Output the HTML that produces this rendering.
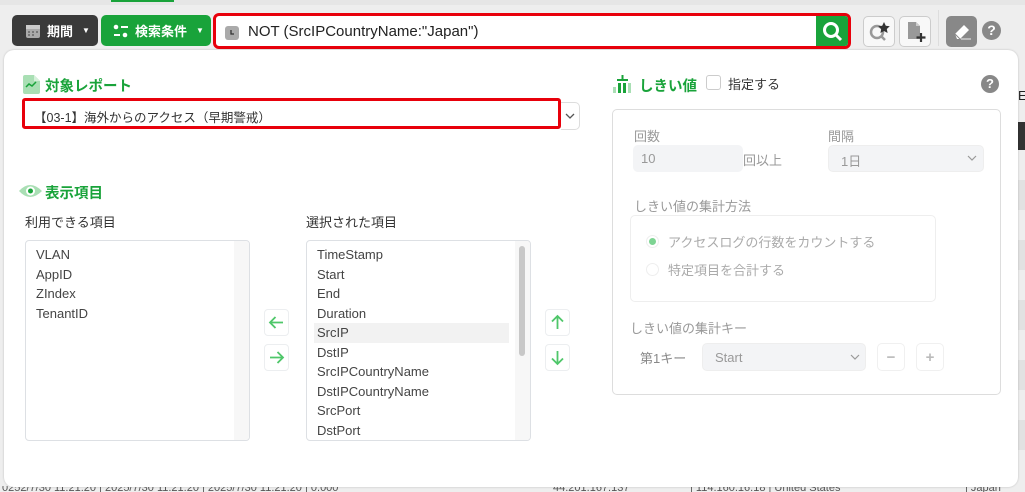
<!DOCTYPE html>
<html><head><meta charset="utf-8"><style>
*{box-sizing:border-box;margin:0;padding:0}
body{width:1025px;height:492px;overflow:hidden;background:#eeeeee;font-family:"Liberation Sans","Noto Sans CJK JP",sans-serif;position:relative;color:#333}
.abs{position:absolute}
.btn{position:absolute;border-radius:5px;color:#fff;font-size:13px;font-weight:bold;display:flex;align-items:center}
.lbl{font-size:13px;color:#333}
.list{position:absolute;border:1px solid #dde0e4;border-radius:4px;background:#fff;font-size:13px;color:#444}
.list div{height:19.5px;line-height:19.5px;padding-left:10px}
.sq{position:absolute;width:25px;height:27px;border:1px solid #eceef0;border-radius:4px;background:#fff}
.g{color:#999}
</style></head><body>
<div class="abs" style="left:0;top:0;width:1025px;height:5px;background:#e6e6e6"></div>
<div class="abs" style="left:111px;top:0;width:63px;height:2px;background:#19a33a"></div>
<div class="abs" style="left:1018px;top:88px;font-size:13px;color:#222">E</div>
<div class="abs" style="left:1018px;top:122px;width:7px;height:28px;background:#333"></div>
<div class="abs" style="left:1018px;top:180px;width:7px;height:30px;background:#e2e2e2"></div>
<div class="abs" style="left:1018px;top:240px;width:7px;height:30px;background:#e2e2e2"></div>
<div class="abs" style="left:1018px;top:300px;width:7px;height:30px;background:#e2e2e2"></div>
<div class="abs" style="left:1018px;top:360px;width:7px;height:30px;background:#e2e2e2"></div>
<div class="abs" style="left:1018px;top:420px;width:7px;height:30px;background:#e2e2e2"></div>
<div class="abs" style="left:0;top:486px;width:1025px;font-size:11px;color:#555;white-space:nowrap;line-height:8px;overflow:hidden;height:6px">
<span style="position:absolute;left:2px;top:-2px">0252/7/30 11:21:20 | 2025/7/30 11:21:20 | 2025/7/30 11:21:20 | 0.000</span>
<span style="position:absolute;left:553px;top:-2px">44.201.167.137</span><span style="position:absolute;left:690px;top:-2px">| 114.160.16.18 | United States</span><span style="position:absolute;left:965px;top:-2px">| Japan</span></div>

<div class="btn" style="left:12px;top:15px;width:86px;height:31px;background:#3a3a3a">
<svg style="margin-left:13px" width="16" height="16" viewBox="0 0 16 16"><rect x="1" y="2" width="14" height="13" rx="2" fill="#aaa"/><rect x="1" y="2" width="14" height="4" fill="#ccc"/><g fill="#777"><rect x="3" y="8" width="2" height="2"/><rect x="7" y="8" width="2" height="2"/><rect x="11" y="8" width="2" height="2"/><rect x="3" y="11" width="2" height="2"/><rect x="7" y="11" width="2" height="2"/></g></svg>
<span style="margin-left:6px">期間</span><span style="margin-left:9px;font-size:8px">▼</span></div>
<div class="btn" style="left:101px;top:15px;width:110px;height:31px;background:#19a33a">
<svg style="margin-left:12px" width="16" height="14" viewBox="0 0 16 14"><circle cx="3" cy="3" r="2.3" fill="#fff"/><rect x="8" y="2" width="7" height="2" fill="#fff"/><rect x="1" y="10" width="6" height="2" fill="#fff"/><circle cx="12" cy="11" r="2.3" fill="#fff"/></svg>
<span style="margin-left:6px">検索条件</span><span style="margin-left:9px;font-size:8px">▼</span></div>
<div class="abs" style="left:213px;top:13px;width:638px;height:36px;border:3px solid #e8000b;border-radius:6px;background:#fff;overflow:hidden">
<svg class="abs" style="left:9px;top:10px" width="14" height="14" viewBox="0 0 14 14"><rect width="14" height="14" rx="3" fill="#aaa"/><path d="M6 4v4h3" stroke="#333" stroke-width="1.3" fill="none"/></svg>
<div class="abs" style="left:32px;top:7px;font-size:15px;color:#222">NOT (SrcIPCountryName:"Japan")</div>
<div class="abs" style="right:0;top:0;width:32px;height:30px;background:#19a33a">
<svg style="margin:5px 0 0 6px" width="22" height="22" viewBox="0 0 22 22"><circle cx="9" cy="9" r="6.5" stroke="#fff" stroke-width="3" fill="none"/><path d="M14 14l5 5" stroke="#fff" stroke-width="3"/></svg></div></div>
<div class="abs" style="left:863px;top:16px;width:32px;height:31px;border:1px solid #ccc;border-radius:5px;background:#f8f8f8">
<svg style="margin:4px 0 0 4px" width="24" height="22" viewBox="0 0 24 22"><circle cx="9" cy="11" r="6" stroke="#999" stroke-width="2.5" fill="none"/><path d="M13 15l4 4" stroke="#999" stroke-width="2.5"/><path d="M16 1l1.8 3.7 4 .5-3 2.8.8 4-3.6-2-3.6 2 .8-4-3-2.8 4-.5z" fill="#333"/></svg></div>
<div class="abs" style="left:899px;top:16px;width:32px;height:31px;border:1px solid #ccc;border-radius:5px;background:#f8f8f8">
<svg style="margin:4px 0 0 7px" width="20" height="22" viewBox="0 0 20 22"><path d="M1 1h8l4 4v13H1z" fill="#999"/><path d="M9 1v4h4" fill="#ccc"/><path d="M14 12v9M9.5 16.5h9" stroke="#333" stroke-width="2.2"/></svg></div>
<div class="abs" style="left:938px;top:10px;width:1px;height:36px;background:#ddd"></div>
<div class="abs" style="left:946px;top:16px;width:31px;height:31px;border-radius:5px;background:#888">
<svg style="margin:6px 0 0 5px" width="22" height="18" viewBox="0 0 22 18"><path d="M4 12l9-9 5 5-9 9H6z" fill="#fff"/><path d="M4 12l5 5" stroke="#888" stroke-width="1"/><path d="M10 17h10" stroke="#ccc" stroke-width="1.5"/></svg></div>
<div class="abs" style="left:982px;top:21px;width:19px;height:19px;border-radius:50%;background:#888;color:#fff;font-weight:bold;font-size:14px;text-align:center;line-height:19px">?</div>

<div class="abs" style="left:4px;top:50px;width:1014px;height:437px;background:#fff;border-radius:10px;box-shadow:0 0 2px rgba(0,0,0,.2)"></div>

<svg class="abs" style="left:23px;top:75px" width="17" height="19" viewBox="0 0 17 19"><path d="M2 0h9l6 6v11a2 2 0 0 1-2 2H2a2 2 0 0 1-2-2V2a2 2 0 0 1 2-2z" fill="#a9dfb4"/><path d="M11 0v6h6" fill="#d5f0da"/><path d="M3 12l3-3 3 2 4-4" stroke="#19a33a" stroke-width="1.5" fill="none"/></svg>
<div class="abs" style="left:45px;top:75px;font-size:14.5px;font-weight:bold;color:#19a33a">対象レポート</div>
<div class="abs" style="left:22px;top:98px;width:539px;height:31px;border:3px solid #e8000b;border-radius:3px;background:#fff"></div>
<div class="abs" style="left:34px;top:107px;font-size:12.5px;color:#333">【03-1】海外からのアクセス（早期警戒）</div>
<div class="abs" style="left:561px;top:102px;width:19px;height:28px;border:1px solid #ddd;border-left:none;border-radius:0 5px 5px 0"></div>
<svg class="abs" style="left:565px;top:113px" width="10" height="7" viewBox="0 0 10 7"><path d="M1 1l4 4 4-4" stroke="#555" stroke-width="1.3" fill="none"/></svg>

<svg class="abs" style="left:19px;top:182px" width="23" height="18" viewBox="0 0 23 18"><path d="M0 9Q11-3 23 9Q11 21 0 9z" fill="#a9dfb4"/><circle cx="11.5" cy="9" r="4.5" fill="#fff"/><circle cx="11.5" cy="9" r="2.5" fill="#19a33a"/></svg>
<div class="abs" style="left:45px;top:182px;font-size:14.5px;font-weight:bold;color:#19a33a">表示項目</div>
<div class="abs lbl" style="left:25px;top:212px">利用できる項目</div>
<div class="abs lbl" style="left:306px;top:212px">選択された項目</div>
<div class="list" style="left:25px;top:240px;width:225px;height:201px;padding-top:4px">
<div>VLAN</div><div>AppID</div><div>ZIndex</div><div>TenantID</div>
<span class="abs" style="right:0;top:0;width:15px;height:199px;background:#f7f7f7;border-radius:0 4px 4px 0"></span></div>
<div class="list" style="left:306px;top:240px;width:225px;height:201px;padding-top:4px;overflow:hidden">
<div>TimeStamp</div><div>Start</div><div>End</div><div>Duration</div><div style="background:#f2f2f2;margin-left:7px;padding-left:3px;width:195px">SrcIP</div><div>DstIP</div><div>SrcIPCountryName</div><div>DstIPCountryName</div><div>SrcPort</div><div>DstPort</div>
<span class="abs" style="right:0;top:0;width:15px;height:199px;background:#f7f7f7"></span>
<span class="abs" style="right:5px;top:5px;width:6px;height:110px;background:#c8c8c8;border-radius:3px"></span></div>
<div class="sq" style="left:264px;top:309px"><svg width="23" height="25" viewBox="0 0 23 25"><path d="M18 12.5H5M10.5 7l-5.5 5.5 5.5 5.5" stroke="#4fc76a" stroke-width="1.8" fill="none"/></svg></div>
<div class="sq" style="left:264px;top:344px"><svg width="23" height="25" viewBox="0 0 23 25"><path d="M5 12.5h13M12.5 7l5.5 5.5-5.5 5.5" stroke="#4fc76a" stroke-width="1.8" fill="none"/></svg></div>
<div class="sq" style="left:545px;top:309px"><svg width="23" height="25" viewBox="0 0 23 25"><path d="M11.5 19V6M6 11.5l5.5-5.5 5.5 5.5" stroke="#4fc76a" stroke-width="1.8" fill="none"/></svg></div>
<div class="sq" style="left:545px;top:344px"><svg width="23" height="25" viewBox="0 0 23 25"><path d="M11.5 6v13M6 13.5l5.5 5.5 5.5-5.5" stroke="#4fc76a" stroke-width="1.8" fill="none"/></svg></div>

<svg class="abs" style="left:613px;top:74px" width="19" height="19" viewBox="0 0 19 19"><rect x="0" y="13" width="3" height="6" fill="#a9dfb4"/><rect x="5" y="9" width="3" height="10" fill="#19a33a"/><rect x="10" y="9" width="3" height="10" fill="#19a33a"/><rect x="15" y="9" width="3" height="10" fill="#a9dfb4"/><rect x="4" y="5" width="11" height="2" fill="#19a33a"/><rect x="8.5" y="1" width="2" height="5" fill="#19a33a"/></svg>
<div class="abs" style="left:639px;top:75px;font-size:14.5px;font-weight:bold;color:#19a33a">しきい値</div>
<div class="abs" style="left:706px;top:75px;width:15px;height:15px;border:1px solid #ccc;border-radius:3px"></div>
<div class="abs lbl" style="left:728px;top:74px">指定する</div>
<div class="abs" style="left:981px;top:75px;width:18px;height:18px;border-radius:50%;background:#888;color:#fff;font-weight:bold;font-size:13px;text-align:center;line-height:18px">?</div>
<div class="abs" style="left:612px;top:109px;width:389px;height:286px;border:1px solid #ddd;border-radius:5px"></div>
<div class="abs lbl g" style="left:634px;top:126px">回数</div>
<div class="abs lbl g" style="left:828px;top:126px">間隔</div>
<div class="abs" style="left:633px;top:145px;width:110px;height:27px;background:#f3f4f6;border-radius:5px;font-size:13px;color:#999;padding:6px 8px">10</div>
<div class="abs lbl g" style="left:743px;top:150px">回以上</div>
<div class="abs" style="left:828px;top:145px;width:156px;height:27px;background:#f3f4f6;border:1px solid #eee;border-radius:5px;font-size:13px;color:#999;padding:5px 12px">1日</div>
<svg class="abs" style="left:967px;top:155px" width="10" height="7" viewBox="0 0 10 7"><path d="M1 1l4 4 4-4" stroke="#999" stroke-width="1.2" fill="none"/></svg>
<div class="abs lbl g" style="left:634px;top:196px">しきい値の集計方法</div>
<div class="abs" style="left:630px;top:215px;width:306px;height:87px;border:1px solid #eee;border-radius:5px"></div>
<div class="abs" style="left:646px;top:235px;width:13px;height:13px;border-radius:50%;border:1px solid #eee;background:#fff"><span style="display:block;margin:2px;width:7px;height:7px;border-radius:50%;background:#7ed493"></span></div>
<div class="abs lbl" style="left:668px;top:232px;color:#aaa">アクセスログの行数をカウントする</div>
<div class="abs" style="left:646px;top:263px;width:13px;height:13px;border-radius:50%;border:1px solid #eee"></div>
<div class="abs lbl" style="left:668px;top:260px;color:#aaa">特定項目を合計する</div>
<div class="abs lbl g" style="left:630px;top:318px">しきい値の集計キー</div>
<div class="abs lbl" style="left:640px;top:348px;color:#888">第1キー</div>
<div class="abs" style="left:702px;top:343px;width:164px;height:28px;background:#f3f4f6;border:1px solid #eee;border-radius:5px;font-size:13px;color:#999;padding:6px 12px">Start</div>
<svg class="abs" style="left:850px;top:354px" width="10" height="7" viewBox="0 0 10 7"><path d="M1 1l4 4 4-4" stroke="#999" stroke-width="1.2" fill="none"/></svg>
<div class="abs" style="left:877px;top:343px;width:28px;height:28px;border:1px solid #f0f0f0;border-radius:5px;color:#bbb;font-weight:bold;text-align:center;line-height:27px;font-size:15px">−</div>
<div class="abs" style="left:916px;top:343px;width:28px;height:28px;border:1px solid #f0f0f0;border-radius:5px;color:#bbb;font-weight:bold;text-align:center;line-height:27px;font-size:15px">+</div>
</body></html>
